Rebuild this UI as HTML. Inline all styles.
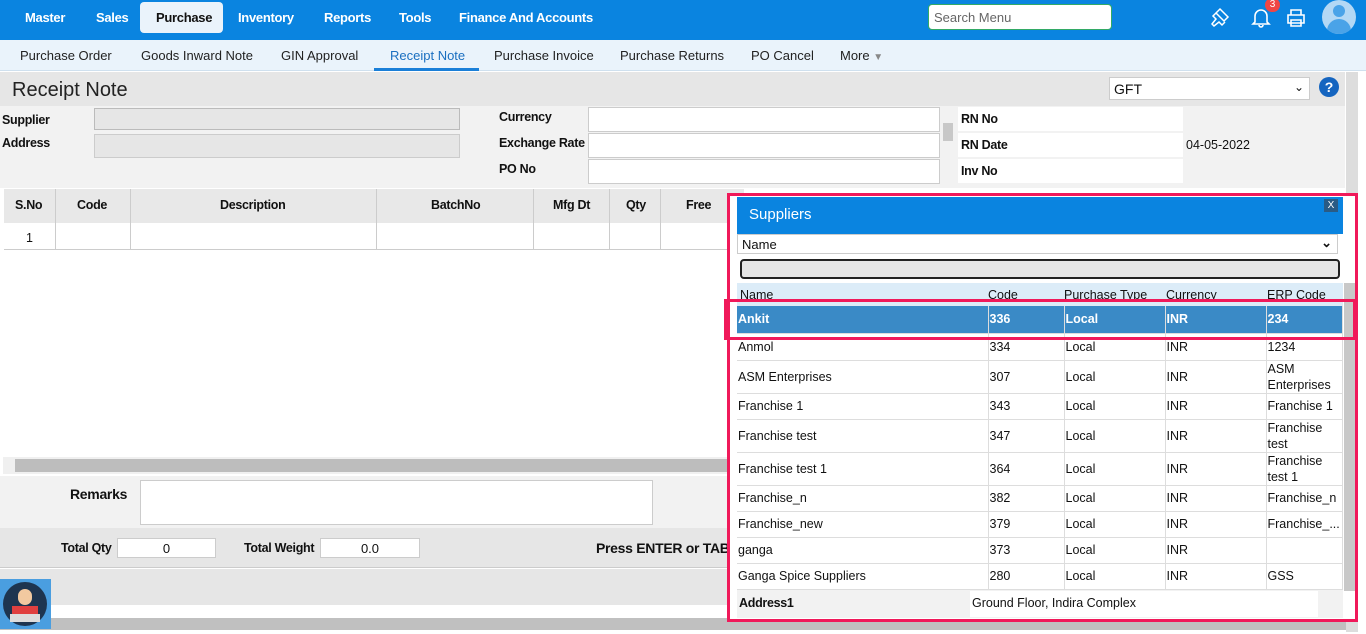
<!DOCTYPE html><html><head><style>
*{box-sizing:border-box;margin:0;padding:0}
body{width:1366px;height:634px;overflow:hidden;font-family:"Liberation Sans",sans-serif;font-size:13px;color:#111;background:#fff;position:relative}
.a{position:absolute}
.nav{left:0;top:0;width:1366px;height:40px;background:#0a84e0}
.nav span{position:absolute;top:10px;color:#fff;font-weight:bold;font-size:13px;letter-spacing:-.3px}
.sub{left:0;top:40px;width:1366px;height:31px;background:#eaf3fb;border-bottom:1px solid #cfe0ee}
.sub span{position:absolute;top:8px;font-size:13px;color:#222}
.lbl{font-size:12.5px;font-weight:bold;color:#111;letter-spacing:-.3px}
.inp{background:#fff;border:1px solid #ccc}
table{border-collapse:collapse}
.pt td{border-right:1px solid #ddd;border-bottom:1px solid #ddd;padding:0 1px;font-size:12.5px;vertical-align:middle;line-height:16px}
</style></head><body>
<div class="a nav">
<span style="left:25px">Master</span><span style="left:96px">Sales</span>
<div class="a" style="left:140px;top:2px;width:83px;height:31px;background:#eaf3fb;border-radius:4px"></div>
<span style="left:156px;color:#111">Purchase</span><span style="left:238px">Inventory</span><span style="left:324px">Reports</span><span style="left:399px">Tools</span><span style="left:459px">Finance And Accounts</span>
<div class="a" style="left:928px;top:4px;width:184px;height:26px;background:#fff;border:1px solid #3a6;border-radius:4px;color:#666;font-size:13px;padding:5px 5px">Search Menu</div>
<svg class="a" style="left:1208px;top:5px" width="24" height="24" viewBox="0 0 24 24" fill="none" stroke="#fff" stroke-width="1.5"><path d="M12 4l8 8-4 4-8-8z M8 8l-3 3 3 3-4 5 2 2 5-4 3 3 3-3"/></svg>
<svg class="a" style="left:1250px;top:6px" width="22" height="22" viewBox="0 0 22 22" fill="none" stroke="#fff" stroke-width="1.6"><path d="M5 16V10a6 6 0 0112 0v6l2 2H3z M9 19a2 2 0 004 0"/></svg>
<div class="a" style="left:1265px;top:-2px;width:15px;height:14px;border-radius:7px;background:#f04545;color:#fff;font-size:10px;text-align:center;line-height:14px">3</div>
<svg class="a" style="left:1285px;top:7px" width="22" height="22" viewBox="0 0 22 22" fill="none" stroke="#fff" stroke-width="1.6"><path d="M6 8V3h10v5 M3 8h16v8H3z M6 13h10v6H6z"/></svg>
<div class="a" style="left:1322px;top:0;width:34px;height:34px;border-radius:17px;background:#b3d8f5;overflow:hidden"><div class="a" style="left:11px;top:5px;width:12px;height:12px;border-radius:6px;background:#4aa3e8"></div><div class="a" style="left:5px;top:19px;width:24px;height:18px;border-radius:12px 12px 0 0;background:#4aa3e8"></div></div>
</div>
<div class="a sub">
<span style="left:20px">Purchase Order</span><span style="left:141px">Goods Inward Note</span><span style="left:281px">GIN Approval</span><span style="left:390px;color:#1a6fc0">Receipt Note</span><span style="left:494px">Purchase Invoice</span><span style="left:620px">Purchase Returns</span><span style="left:751px">PO Cancel</span><span style="left:840px">More <span style="position:static;color:#888;font-size:10px">▼</span></span>
<div class="a" style="left:374px;top:28px;width:105px;height:3px;background:#1a7fd8"></div>
</div>
<div class="a" style="left:0;top:72px;width:1345px;height:34px;background:#e6e6e6"></div>
<div class="a" style="left:12px;top:79px;font-size:20px;color:#222">Receipt Note</div>
<div class="a inp" style="left:1109px;top:77px;width:201px;height:23px;padding:3px 4px;font-size:14px">GFT<span style="position:absolute;right:5px;top:2px;font-size:12px">⌄</span></div>
<div class="a" style="left:1319px;top:77px;width:20px;height:20px;border-radius:10px;background:#1565c0;color:#fff;font-weight:bold;text-align:center;line-height:20px;font-size:14px">?</div>
<div class="a" style="left:1346px;top:72px;width:12px;height:560px;background:#ddd"></div>
<div class="a" style="left:0;top:106px;width:1345px;height:82px;background:#f2f2f2"></div>
<div class="a lbl" style="left:2px;top:113px">Supplier</div><div class="a lbl" style="left:2px;top:136px">Address</div>
<div class="a" style="left:94px;top:108px;width:366px;height:22px;background:#e6e6e6;border:1px solid #bbb"></div>
<div class="a" style="left:94px;top:134px;width:366px;height:24px;background:#e6e6e6;border:1px solid #ccc"></div>
<div class="a lbl" style="left:499px;top:110px">Currency</div><div class="a lbl" style="left:499px;top:136px">Exchange Rate</div><div class="a lbl" style="left:499px;top:162px">PO No</div>
<div class="a inp" style="left:588px;top:107px;width:352px;height:25px"></div>
<div class="a inp" style="left:588px;top:133px;width:352px;height:25px"></div>
<div class="a inp" style="left:588px;top:159px;width:352px;height:25px"></div>
<div class="a" style="left:943px;top:123px;width:10px;height:18px;background:#c8c8c8"></div>
<div class="a" style="left:958px;top:107px;width:225px;height:24px;background:#fff"></div>
<div class="a" style="left:958px;top:133px;width:225px;height:24px;background:#fff"></div>
<div class="a" style="left:958px;top:159px;width:225px;height:24px;background:#fff"></div>
<div class="a lbl" style="left:961px;top:112px">RN No</div><div class="a lbl" style="left:961px;top:138px">RN Date</div><div class="a lbl" style="left:961px;top:164px">Inv No</div>
<div class="a" style="left:1186px;top:138px;font-size:12.5px">04-05-2022</div>
<div class="a" style="left:4px;top:189px;width:740px;height:34px;background:#e8e8e8"></div>
<div class="a" style="left:4px;top:223px;width:740px;height:27px;background:#fff;border-bottom:1px solid #ccc"></div>
<div class="a lbl" style="left:15px;top:198px">S.No</div><div class="a lbl" style="left:77px;top:198px">Code</div><div class="a lbl" style="left:220px;top:198px">Description</div><div class="a lbl" style="left:431px;top:198px">BatchNo</div><div class="a lbl" style="left:553px;top:198px">Mfg Dt</div><div class="a lbl" style="left:626px;top:198px">Qty</div><div class="a lbl" style="left:686px;top:198px">Free</div>
<div class="a" style="left:26px;top:231px;font-size:12.5px">1</div>
<div class="a" style="left:55px;top:189px;width:1px;height:61px;background:#ccc"></div><div class="a" style="left:130px;top:189px;width:1px;height:61px;background:#ccc"></div><div class="a" style="left:376px;top:189px;width:1px;height:61px;background:#ccc"></div><div class="a" style="left:533px;top:189px;width:1px;height:61px;background:#ccc"></div><div class="a" style="left:609px;top:189px;width:1px;height:61px;background:#ccc"></div><div class="a" style="left:660px;top:189px;width:1px;height:61px;background:#ccc"></div>
<div class="a" style="left:3px;top:457px;width:740px;height:17px;background:#f0f0f0"></div>
<div class="a" style="left:15px;top:459px;width:728px;height:13px;background:#bdbdbd"></div>
<div class="a" style="left:0;top:476px;width:745px;height:52px;background:#f2f2f2"></div>
<div class="a" style="left:70px;top:486px;font-size:14px;font-weight:bold;letter-spacing:-.3px">Remarks</div>
<div class="a inp" style="left:140px;top:480px;width:513px;height:45px"></div>
<div class="a" style="left:0;top:528px;width:745px;height:40px;background:#e6e6e6;border-bottom:1px solid #ccc"></div>
<div class="a lbl" style="left:61px;top:541px">Total Qty</div><div class="a inp" style="left:117px;top:538px;width:99px;height:20px;text-align:center;padding-top:2px">0</div>
<div class="a lbl" style="left:244px;top:541px">Total Weight</div><div class="a inp" style="left:320px;top:538px;width:100px;height:20px;text-align:center;padding-top:2px">0.0</div>
<div class="a" style="left:596px;top:540px;font-size:14px;font-weight:bold;letter-spacing:-.3px">Press ENTER or TAB f</div>
<div class="a" style="left:0;top:569px;width:745px;height:36px;background:#e6e6e6"></div>
<div class="a" style="left:0;top:618px;width:1346px;height:12px;background:#c0c0c0"></div>
<div class="a" style="left:0;top:579px;width:51px;height:50px;background:#4a9ee0"><div class="a" style="left:3px;top:3px;width:44px;height:44px;border-radius:22px;background:#1e3550"></div><div class="a" style="left:12px;top:27px;width:26px;height:14px;background:#e04040"></div><div class="a" style="left:18px;top:10px;width:14px;height:16px;border-radius:7px;background:#f2c9a0"></div><div class="a" style="left:10px;top:35px;width:30px;height:8px;background:#ddd"></div></div>
<!-- popup -->
<div class="a" style="left:727px;top:193px;width:631px;height:429px;border:3px solid #f0195a;background:#fff"></div>
<div class="a" style="left:737px;top:197px;width:606px;height:37px;background:#0a84e0"></div>
<div class="a" style="left:749px;top:206px;color:#fff;font-size:15px">Suppliers</div>
<div class="a" style="left:1324px;top:199px;width:14px;height:13px;background:#2a5b85;color:#fff;font-size:10px;text-align:center;line-height:13px">X</div>
<div class="a inp" style="left:737px;top:234px;width:601px;height:20px;padding:2px 4px;font-size:13px">Name<span style="position:absolute;right:5px;top:0;font-weight:bold">⌄</span></div>
<div class="a" style="left:740px;top:259px;width:600px;height:20px;background:#e6e6e6;border:2px solid #222;border-radius:4px"></div>
<div class="a" style="left:737px;top:283px;width:606px;height:23px;background:#dcecf8"></div>
<div class="a" style="left:737px;top:290px;width:606px;height:10px;overflow:hidden;font-size:12.5px"><span class="a" style="left:3px;top:-2px">Name</span><span class="a" style="left:251px;top:-2px">Code</span><span class="a" style="left:327px;top:-2px">Purchase Type</span><span class="a" style="left:429px;top:-2px">Currency</span><span class="a" style="left:530px;top:-2px">ERP Code</span></div>
<div class="a" style="left:1344px;top:283px;width:11px;height:308px;background:#c8c8c8"></div>
<table class="a pt" style="left:737px;top:306px;width:606px">
<tr style="height:27px;background:#3a8ac6;color:#fff;font-weight:bold"><td style="width:251px">Ankit</td><td style="width:76px">336</td><td style="width:101px">Local</td><td style="width:101px">INR</td><td>234</td></tr>
<tr style="height:27px"><td>Anmol</td><td>334</td><td>Local</td><td>INR</td><td>1234</td></tr>
<tr style="height:33px"><td>ASM Enterprises</td><td>307</td><td>Local</td><td>INR</td><td>ASM<br>Enterprises</td></tr>
<tr style="height:26px"><td>Franchise 1</td><td>343</td><td>Local</td><td>INR</td><td>Franchise 1</td></tr>
<tr style="height:33px"><td>Franchise test</td><td>347</td><td>Local</td><td>INR</td><td>Franchise<br>test</td></tr>
<tr style="height:33px"><td>Franchise test 1</td><td>364</td><td>Local</td><td>INR</td><td>Franchise<br>test 1</td></tr>
<tr style="height:26px"><td>Franchise_n</td><td>382</td><td>Local</td><td>INR</td><td>Franchise_n</td></tr>
<tr style="height:26px"><td>Franchise_new</td><td>379</td><td>Local</td><td>INR</td><td>Franchise_...</td></tr>
<tr style="height:26px"><td>ganga</td><td>373</td><td>Local</td><td>INR</td><td></td></tr>
<tr style="height:26px"><td>Ganga Spice Suppliers</td><td>280</td><td>Local</td><td>INR</td><td>GSS</td></tr>
</table>
<div class="a" style="left:737px;top:590px;width:606px;height:28px;background:#f2f2f2"></div>
<div class="a lbl" style="left:739px;top:596px">Address1</div>
<div class="a" style="left:970px;top:591px;width:348px;height:26px;background:#fff;padding:5px 2px;font-size:12.5px">Ground Floor, Indira Complex</div>
<div class="a" style="left:724px;top:299px;width:632px;height:41px;border:3px solid #f0195a"></div>
</body></html>
